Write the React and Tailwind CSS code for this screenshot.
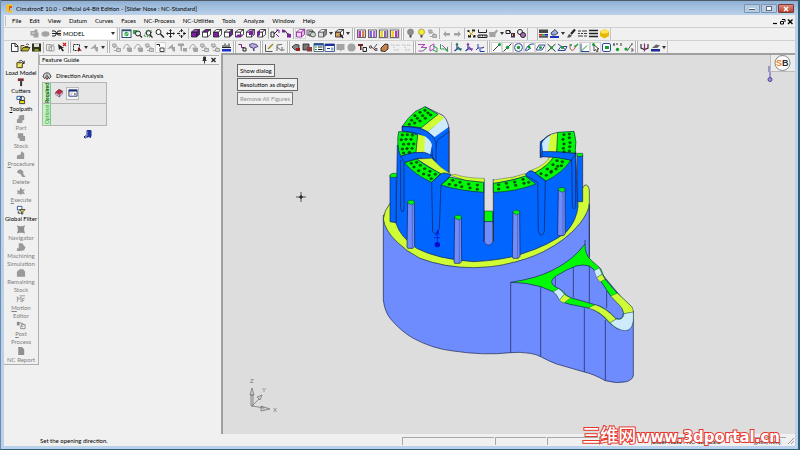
import React from 'react';

const G = '#a3a3a3';
const K = '#222';
const P = '#7b1fa2';

const cube = (front, side, top, stroke = K) => (
  <g stroke={stroke} strokeWidth="0.8">
    <path d="M1.5 4h5v5h-5z" fill={front} />
    <path d="M1.5 4l3-2.5h5L6.500 4z" fill={top} />
    <path d="M6.500 4l3-2.500v5l-3 2.500z" fill={side} />
  </g>
);

const blob = (color) => (
  <g fill={color}>
    <path d="M1.500 3h4v-1.500h3v3h1v5h-5v-2h-3z" />
    <path d="M3 5h3" stroke="#ddd" />
  </g>
);

const ghost = (a, b) => (
  <g fill="none" stroke={a}>
    <path d="M1.500 2h3.500v3H2z" fill={b} />
    <path d="M2.500 6l2.500-2 3 2.500" />
    <path d="M5.500 6.500h4v3h-4z" fill={b} />
    <path d="M3 8.500h2" />
  </g>
);

const book = (a, b) => (
  <g>
    <rect x="1.500" y="2" width="8" height="7.500" fill="#fff" stroke="#444" strokeWidth="0.8" />
    <rect x="2.500" y="3" width="2.500" height="6" fill={a} />
    <rect x="6" y="3" width="2.500" height="6" fill={b} />
  </g>
);

const bulb = (c) => (
  <g>
    <circle cx="5.500" cy="4" r="3" fill={c} stroke="#777" strokeWidth="0.6" />
    <path d="M4.500 7h2v2.500h-2z" fill="#444" />
  </g>
);

const sketch = (a, b) => (
  <g fill="none" stroke={a}>
    <path d="M1 2.500h7L4 5.500h6L6 9H1.500" />
    <path d="M6 9l3-3" stroke={b} />
  </g>
);

const axis = (a, b) => (
  <g fill="none" stroke={a} strokeWidth="1.200">
    <path d="M4 2v5h5M4 7L1.500 9" />
    <path d="M5 5l3 3.500M3 3l1-1.500 1 1.500" stroke={b} />
  </g>
);

const glyphs = {
  solid: blob(G),
  ellipse: <ellipse cx="5.500" cy="6" rx="4" ry="2.800" fill={G} />,
  layers: <path d="M1 3h3l3 4h3M1 8h3l3-5h3M1 5.500h9" fill="none" stroke={K} />,
  shade: (
    <g>
      <rect x="1" y="2" width="9" height="7.500" fill="#fff" stroke="#2b4f6b" />
      <path d="M1 2.500h9" stroke="#2b4f6b" strokeWidth="1.500" />
      <circle cx="5.500" cy="6" r="2.200" fill="#2fa84f" />
      <path d="M4 7l3-2" stroke="#fff" strokeWidth="0.700" />
    </g>
  ),
  zoomBox: (
    <g fill="none">
      <path d="M1 2h4v4H1z" fill="#39a24b" />
      <circle cx="6" cy="5.500" r="2.500" stroke={K} fill="#e8f2e8" />
      <path d="M8 7.500l2 2" stroke={K} strokeWidth="1.300" />
    </g>
  ),
  zoomAll: (
    <g fill="none">
      <path d="M1 8l3-6 5 1-2 6z" stroke="#2c9440" strokeDasharray="1.500 1" />
      <circle cx="5.500" cy="5" r="2.300" stroke={K} />
      <path d="M7 7l2.500 2.500" stroke={K} strokeWidth="1.300" />
    </g>
  ),
  zoom: (
    <g fill="none" stroke={K}>
      <circle cx="4.500" cy="4" r="2.500" fill="#fff" />
      <path d="M6.500 6l3.500 3.500" strokeWidth="1.500" />
    </g>
  ),
  pan: (
    <g stroke={K} fill={K}>
      <path d="M5.500 2v7M2 5.500h7" />
      <path d="M5.500 1l1.500 2H4zM5.500 10l1.500-2H4zM1 5.500l2-1.500v3zM10 5.500L8 4v3z" stroke="none" />
    </g>
  ),
  spin: (
    <g fill="none" stroke={K}>
      <path d="M5.500 1.500l3.500 4-3.500 4-3.500-4z" strokeDasharray="2 1" />
      <path d="M5.500 1v3M5.500 7v3M1 5.500h3M7 5.500h3" />
    </g>
  ),
  cubeFull: cube(P, '#5a0f7d', '#a24bc4'),
  cubeTop: cube('#fff', '#fff', P),
  cubeFront: cube(P, '#fff', '#fff'),
  cubeSide: cube('#fff', P, '#fff'),
  cubeBase: (
    <g>
      {cube('#fff', '#fff', '#fff')}
      <path d="M1.500 9l2-2.500h5.500L6.500 9z" fill={P} />
    </g>
  ),
  cubeBack: (
    <g>
      {cube('#fff', '#fff', '#fff')}
      <path d="M4 2.500h4.500v4.500H4z" fill={P} />
    </g>
  ),
  cubeLeft: (
    <g>
      {cube('#fff', '#fff', '#fff')}
      <path d="M1.500 4L4 2v5L1.500 9z" fill={P} />
    </g>
  ),
  pointer: (
    <g fill="none" stroke={K}>
      <path d="M1 4h3v5H1zM4 6l4-4" />
      <path d="M6 2h3v3M6 6l3 3" stroke={P} />
    </g>
  ),
  tree: (
    <g>
      <path d="M1 2l3 .5 2 3 3 1" fill="none" stroke={K} />
      <path d="M1 2h3v2.500H1zM6 6h4v3.500H6z" fill={P} />
    </g>
  ),
  wire: cube('#f6d6f6', '#e9b8ea', '#fff', '#8e1f99'),
  hidden: (
    <g fill="#dde" stroke="#444" strokeWidth="0.800">
      <path d="M1 2h5.500v5H1zM3 3.500h5v4.500H3z" />
      <circle cx="7" cy="6.500" r="2.500" fill="#c9d6c9" />
    </g>
  ),
  box: cube('#ddd', '#888', '#fff', '#555'),
  boxPick: (
    <g>
      {cube('#d8a060', '#fff', '#f2f2f2')}
      <path d="M6 6l3 4" stroke={K} strokeWidth="1.500" />
    </g>
  ),
  book1: book('#b33ac0', '#c84'),
  book2: book('#7a63d8', '#b06ad8'),
  book3: book('#f0d020', '#8a63b8'),
  book4: book('#f0d020', '#b33ac0'),
  bulbOff: bulb('#8d8d8d'),
  bulbOn: bulb('#f5f11c'),
  bulbs: ghost(G, '#bbb'),
  back: <path d="M2 6l3-3v2h4v2.500H5V9z" fill={G} />,
  fwd: <path d="M9 6L6 3v2H2v2.500h4V9z" fill={G} />,
  points: (
    <g fill={K}>
      <path d="M1.500 2h2v2h-2zM6 1.500h3v2H6zM2 7h3v2.500H2zM7 7h2.500v2.500H7z" />
      <path d="M3 4l5 4M8 3L3 8" stroke="#c8a020" />
    </g>
  ),
  measure: (
    <g fill="none" stroke={K}>
      <path d="M1.500 1.500v3h8v-3M1 7h9v2.500H1z" />
      <path d="M3 7v1.500M5.500 7v1.500M8 7v1.500" />
    </g>
  ),
  grayBrush: <path d="M1 4h5l3-2.500 1 1.500-2.500 3V9h-6z" fill={G} />,
  cut: (
    <g>
      <path d="M1 2.500h4v3H1zM4 3l3 3" stroke={K} fill="none" />
      <path d="M6 5h4v4.500H6z" fill="#4a2a55" />
      <path d="M7 6h1v2H7z" fill="#e0c020" />
    </g>
  ),
  cut2: (
    <g>
      <circle cx="4" cy="4" r="2.500" fill="none" stroke={K} />
      <circle cx="7" cy="7" r="2.500" fill="#b56ac0" stroke={K} />
    </g>
  ),
  palette: (
    <g>
      <path d="M1 1.500h9v3.500H1z" fill="#444" />
      <path d="M1 6h3v1.700H1z" fill="#d22" />
      <path d="M4 6h3v1.700H4z" fill="#2a2" />
      <path d="M7 6h3v1.700H7z" fill="#22c" />
      <path d="M1 8h9v1.700H1z" fill="#555" />
    </g>
  ),
  fill: (
    <g>
      <path d="M2 5l4-3.500 3 3.500-3 2H3z" fill="#9ab0e8" stroke={K} strokeWidth="0.800" />
      <path d="M1 8h9v2H1z" fill="#1f2fc0" />
    </g>
  ),
  brush: (
    <g>
      <path d="M5 6l4-4.500" stroke={K} strokeWidth="2.200" />
      <path d="M1 9.500L3 6l3 1.500-2 2z" fill="#555" />
    </g>
  ),
  dashes: <path d="M1 3h3M5 3h5M1 5.500h2M4 5.500h2M7 5.500h3M1 8h5M7 8h3" stroke={K} strokeWidth="0.900" />,
  lines: <path d="M1 2.500h9M1 5.500h9M1 8.500h9" stroke={K} strokeWidth="1.600" />,
  gold: (
    <g>
      <path d="M1 3.500l4.500-2.500L10 3.500V8l-4.500 2.500L1 8z" fill="#e6b800" />
      <ellipse cx="5.500" cy="3.500" rx="4" ry="2" fill="#ffe35a" />
    </g>
  ),
  doc: <path d="M2.500 1.500h4l2.500 2.500v5.500H2.500zM6 1.500v3h3" fill="#fff" stroke={K} strokeWidth="0.900" />,
  open: (
    <g stroke={K} strokeWidth="0.800">
      <path d="M1 9V3.500h3l1 1h3V6" fill="#f4ea6a" />
      <path d="M1 9l2-3.500h7L8 9z" fill="#b8b020" />
      <path d="M6 2.500q2-1.500 3 .5" fill="none" />
    </g>
  ),
  save: (
    <g>
      <path d="M1 1.500h9v8H1z" fill="#30351c" />
      <path d="M3 1.500h5V5H3z" fill="#ddd" />
      <path d="M3.500 7h4v2.500h-4z" fill="#8a9a30" />
    </g>
  ),
  grayBox: (
    <g fill="none" stroke={G}>
      <path d="M1.500 2.500h5v6h-5zM4 4h5v5H4z" />
      <path d="M4 7l5-5" />
    </g>
  ),
  deselect: (
    <g>
      <path d="M2 2l1 6 1.500-1.500 2 3 1.500-1-2-2.500H8z" fill={K} />
      <path d="M7 1l3 3M10 1L7 4" stroke="#d11" strokeWidth="1.200" />
    </g>
  ),
  select: (
    <g fill="none">
      <path d="M1.500 2.500h6v6h-6z" stroke={K} strokeDasharray="2 1" />
      <path d="M6 5v5l1.500-1.500L10 9z" fill="#7a1414" />
    </g>
  ),
  g1: ghost(G, '#d0d0d0'),
  g2: (
    <g fill={G}>
      <path d="M1 7l6-5v4z" />
      <path d="M5 5h4v4.500H7z" />
    </g>
  ),
  g3: (
    <g fill="none" stroke={G}>
      <path d="M1.500 7q1-5 4.500-4.500l2 3" />
      <path d="M5 6l4.500 0v3.500H6z" fill={G} />
    </g>
  ),
  g4: (
    <g fill={G}>
      <path d="M1 1.500h6v2.500H5v5H3.500V4H1z" />
      <path d="M6 6h4v3.500H6z" />
    </g>
  ),
  pickDark: (
    <g>
      <path d="M1.500 2.500h3v2" fill="none" stroke={K} />
      <path d="M5 6h4v3.500H5z" fill="none" stroke="#444" />
    </g>
  ),
  rulerBlue: (
    <g>
      <path d="M1 7h9v2.500H1z" fill="#1b2fd0" />
      <path d="M2 6V3M4 6V1.500M6 6V3M8 6V1.500M1 5.500h9" stroke={K} />
    </g>
  ),
  hook: (
    <g fill="none">
      <path d="M1.500 2.500h3v3h3" stroke="#7b1f7b" />
      <path d="M6 6h3v3H6z" stroke={K} />
    </g>
  ),
  funnel: <path d="M1.500 2.500l3-1 4 1 1.500 2-4 1.500v3l-1-3-3-1z" fill="#b9a8dd" stroke="#33306a" strokeWidth="0.800" />,
  edit: (
    <g fill="none">
      <path d="M1.500 2.500v7h7" stroke="#555" />
      <path d="M4 7l5-5" stroke="#9a8a20" strokeWidth="1.500" />
    </g>
  ),
  curve: <path d="M2 9V3l5-.5M2 5l5 4M7 5v3h2.500" fill="none" stroke="#666" />,
  feat1: (
    <g>
      <path d="M1 5q3-4 7-2v5H4z" fill="#888" stroke={K} strokeWidth="0.800" />
      <path d="M5 6h4v3H5z" fill="#9a2020" />
    </g>
  ),
  feat2: (
    <g>
      <path d="M1 2h6v6H1z" fill="#777" stroke={K} strokeWidth="0.800" />
      <path d="M5 5h5v4.500H5z" fill="#8b3a3a" />
    </g>
  ),
  list: (
    <g>
      <path d="M1 1.500h9.500v8H1z" fill="#fff" stroke="#2c5560" strokeWidth="0.800" />
      <path d="M1 2.500h9.500" stroke="#1e4f9c" strokeWidth="2" />
      <path d="M2 5h2M2 7.500h2" stroke="#1a9a4a" />
      <path d="M5 5h4.500M5 7.500h4.500" stroke={K} />
    </g>
  ),
  dialog: (
    <g>
      <path d="M1 2h9.500v7.500H1z" fill="#fff" stroke="#223a8a" strokeWidth="0.800" />
      <path d="M1 3h9.500" stroke="#1b2fa0" strokeWidth="2" />
      <path d="M3 6.500h3" stroke="#1b2fa0" />
      <path d="M7 5.500h2.500v3H7z" fill="#8aa" />
    </g>
  ),
  note: <path d="M1.500 2h8v6H7l-1.500 1.500L5 8H1.500z" fill={G} />,
  disc: <circle cx="5.500" cy="5.500" r="4" fill={G} />,
  stamp: (
    <g>
      <path d="M1 2h5v2H4.500v4H3V4H1z" fill="#6b2020" />
      <path d="M6 5.500h3.500v4H6z" fill="none" stroke={K} />
    </g>
  ),
  nodes: (
    <g fill="none" stroke="#555">
      <path d="M1.500 4h2v2h-2zM6 6l3-4M7 6.500h2v2H7z" />
      <path d="M3.500 5l3.500 3" stroke="#833" />
    </g>
  ),
  wedge: <path d="M2 9V6l4-4 3 .5v4.500L6 9.500z" fill="#c9854a" stroke={K} strokeWidth="0.900" />,
  gDots: <path d="M1 3h3v3M6 3h3v2M4 8h3M8 7v2.500" fill="none" stroke="#b5b5b5" strokeDasharray="1.500 1" />,
  skA: sketch('#b044b8', '#2aa84a'),
  skB: (
    <g fill="none">
      <path d="M2 9V4l4-2v5z" stroke="#b044b8" />
      <path d="M5 4l4 2v4l-4-2" stroke="#2aa84a" />
    </g>
  ),
  skC: (
    <g fill="none">
      <path d="M1.500 2v5h4l3 2.500V5" stroke="#2aa84a" />
      <path d="M3 3l5 5" stroke="#b044b8" />
    </g>
  ),
  ax1: axis('#1b3a9a', '#127a3a'),
  ax2: axis('#1b3aaa', '#a020a0'),
  ax3: (
    <g fill="none" stroke="#1b3aaa">
      <path d="M3 2v4h4M5 7v2.500h4.500M3 6L1 8" />
      <path d="M7 6l2-1" stroke={K} />
    </g>
  ),
  ray: (
    <g>
      <path d="M2 9l6-6" stroke={K} strokeWidth="0.900" />
      <circle cx="8.500" cy="2.500" r="1.500" fill="#12a030" />
    </g>
  ),
  mid: (
    <g>
      <path d="M1.500 9.500l8-8" stroke={K} strokeWidth="0.900" />
      <circle cx="5.500" cy="5.500" r="1.700" fill="#12a030" />
    </g>
  ),
  center: (
    <g>
      <circle cx="5.500" cy="5.500" r="4" fill="none" stroke="#33479a" />
      <circle cx="5.500" cy="5.500" r="1.700" fill="#12a030" />
    </g>
  ),
  near: (
    <g>
      <path d="M1 9q3-8 9-7M2 9l5-3" fill="none" stroke="#33479a" />
      <circle cx="5" cy="5" r="1.500" fill="#12a030" />
    </g>
  ),
  plane: (
    <g>
      <path d="M1 8l3-5h6L7 8z" fill="#fff" stroke="#33479a" />
      <circle cx="5.500" cy="5.500" r="1.500" fill="#12a030" />
    </g>
  ),
  cross: (
    <g>
      <path d="M1.500 2l8 7.500M9.500 2l-8 7.500" stroke="#333" />
      <circle cx="5.500" cy="5.700" r="1.500" fill="#12a030" />
    </g>
  ),
  planeX: (
    <g>
      <path d="M1 8.500l3-4h6l-2 4zM1 2l8 6" fill="none" stroke="#33479a" />
      <circle cx="5.500" cy="5.500" r="1.500" fill="#12a030" />
    </g>
  ),
  tangent: (
    <g fill="none">
      <path d="M2 2v4q2 5 5 0V3" stroke="#a55" />
      <path d="M7 5l3-3M2 3h2" stroke="#12a030" strokeWidth="1.300" />
    </g>
  ),
  origin: (
    <g fill="none">
      <path d="M2 1.500v8h8" stroke="#33479a" />
      <path d="M2 9.500l6-6" stroke="#12a030" />
    </g>
  ),
  arrowPt: (
    <g>
      <path d="M4 3v6l1.500-1.500L7 10l1-.5-1-2.500h2z" fill="#fff" stroke={K} strokeWidth="0.800" />
      <circle cx="3.500" cy="2.500" r="1.500" fill="#12a030" />
    </g>
  ),
  frame: (
    <g>
      <rect x="1.500" y="1.500" width="8" height="8" rx="1.500" fill="#fff" stroke="#33479a" />
      <path d="M4 4h4v3H4z" fill="#12a030" />
    </g>
  ),
  xyz: (
    <g>
      <path d="M1 2h2M4 2h2M8 2h2M2 2v2M9 3v1" stroke="#333" />
      <circle cx="5.500" cy="7.500" r="1.700" fill="#12a030" />
    </g>
  ),
  percent: (
    <g>
      <path d="M4 9l5-7" stroke="#555" />
      <circle cx="3" cy="7" r="1.600" fill="#12a030" />
      <path d="M8 2h2M8 7h2v2H8" fill="none" stroke="#555" />
    </g>
  ),
  psi: (
    <g fill="none" strokeWidth="1.200">
      <path d="M2 2v4l3.500 1.500L9 6V2" stroke="#333" />
      <path d="M5.500 1.500v8" stroke="#a0208a" />
    </g>
  ),
  plate: (
    <g>
      <path d="M2 6l4-3.500 4 1L7 6z" fill="#666" />
      <path d="M1 7h9v2.500H1z" fill="#1b2a9a" />
    </g>
  ),
};

const Glyph = ({ name, className = 'size-[11px]' }) => (
  <svg viewBox="0 0 11 11" className={className} aria-hidden="true">
    {glyphs[name]}
  </svg>
);

const viewRow = [
  ['shade', 'zoomBox', 'zoomAll', 'zoom', 'pan', 'spin'],
  '|',
  ['cubeFull', 'cubeTop', 'cubeFront', 'cubeSide', 'cubeBase', 'cubeBack', 'cubeLeft'],
  '|',
  ['pointer', 'tree'],
  '|',
  ['wire*', 'hidden', 'box', 'v', 'boxPick', 'v'],
  '||',
  ['book1', 'book2', 'book3*', 'book4*'],
  '||',
  ['bulbOff', 'bulbOn', 'bulbs'],
  '|',
  ['back', 'fwd'],
  '|',
  ['points', 'measure', 'grayBrush', 'v', 'cut', 'cut2'],
  '|||',
  ['palette', 'fill', 'v', 'brush', 'dashes', 'lines', 'gold'],
];

const pickRow = [
  ['doc', 'open', 'save'],
  '|',
  ['grayBox', 'deselect'],
  '||',
  ['select', 'v', 'g2', 'v'],
  '||',
  ['g1', 'g3', 'g3', 'g1', 'pickDark*', 'g2', 'g4', 'g3', 'g1', 'g1', 'rulerBlue'],
  '||',
  ['hook', 'funnel'],
  '||',
  ['edit', 'curve'],
  '||',
  ['feat1', 'feat2', 'list', 'dialog', 'note', 'disc', 'stamp', 'nodes', 'wedge', 'gDots', 'gDots'],
  '||',
  ['skA', 'skB', 'skC'],
  '|',
  ['ax1', 'ax2', 'ax3'],
  '||',
  ['ray*', 'mid*', 'center*', 'near*', 'plane*', 'cross', 'planeX', 'tangent', 'origin*', 'arrowPt*', 'frame', 'xyz', 'percent'],
  '||',
  ['psi', 'plate', 'v'],
];

const Separator = ({ kind }) => {
  if (kind === '|') return <span className="w-[3px] h-[11px] border-l border-[#b4b4b4] ml-px -mr-px" />;
  if (kind === '||') return <span className="w-[3px] h-[12px] border-x border-[#b4b4b4] bg-white mx-px" />;
  return <span className="w-[11px] h-[12px] border-x border-[#b4b4b4]" />;
};

const ToolItems = ({ row }) =>
  row.map((group, i) =>
    typeof group === 'string' ? (
      <Separator key={i} kind={group} />
    ) : (
      <div key={i} className="flex items-center">
        {group.map((name, j) => {
          if (name === 'v') {
            return (
              <button key={j} aria-label="More" className="w-[6px] h-[11px] flex items-center justify-center">
                <svg viewBox="0 0 4 3" className="w-1 h-[3px]"><path d="M0 0h4L2 3z" fill="#333" /></svg>
              </button>
            );
          }
          const pressed = name.endsWith('*');
          const id = name.replace('*', '');
          return (
            <button
              key={j}
              aria-label={id}
              className={`size-[11px] ${pressed ? 'bg-[#fafafa] outline outline-1 -outline-offset-1 outline-[#d4d4d4]' : ''}`}
            >
              <Glyph name={id} />
            </button>
          );
        })}
      </div>
    )
  );

const menus = ['File', 'Edit', 'View', 'Datum', 'Curves', 'Faces', 'NC-Process', 'NC-Utilities', 'Tools', 'Analyze', 'Window', 'Help'];

const sideIcons = {
  load: (
    <g>
      <path d="M1 9.500V4h6v5.500z" fill="#e8d82a" stroke={K} strokeWidth="0.900" />
      <path d="M3 2.500l3-1 3 3M9 2v3H6" fill="none" stroke={K} />
      <path d="M2 8.500l5-4" stroke="#fff" />
    </g>
  ),
  cutter: (
    <g>
      <path d="M2 1.500h6.500v3H2z" fill="#7a3030" />
      <path d="M4.500 4.500h2.200v5.500H4.500z" fill="#333" />
    </g>
  ),
  path: (
    <g fill="none" strokeWidth="0.900">
      <path d="M1 5V1.500h5V5z" stroke="#1d3a9a" fill="#cfe" />
      <circle cx="7" cy="4" r="2.500" stroke={K} />
      <path d="M4 9.500V6h5.500v3.500z" stroke={K} fill="#e8d82a" />
    </g>
  ),
  part: <path d="M3 2l3-1h3v6H7v3H1V6l2-1z" fill="#999" />,
  stock: <path d="M2 1.500h6v3h2V10H4V7H2z" fill="#999" />,
  proc: <path d="M1 6l4-1 1-3.500 3 2V10H1z" fill="#999" />,
  del: <path d="M2 2.500l3-1 3 2v3l2.500 3.500H7L5 7 1 5z" fill="#999" />,
  exec: <path d="M1 5h3l1-3.500L7 4l3-.5L8 6l2 3-3-.5L4 10V8L1 9l1-2z" fill="#999" />,
  filter: (
    <g>
      <path d="M1.500 1.500h5v4h-5z" fill="#fff" stroke="#2a4aa0" />
      <path d="M4 5h6L7.500 7.500V10H6V7.500z" fill="#e8d82a" stroke={K} strokeWidth="0.800" />
      <path d="M2.500 7v2H5" fill="none" stroke={K} />
    </g>
  ),
  nav: <path d="M1 1.500l3 1h3l3-1-1 3v3l1 3-3-1H4l-3 1 1-3v-3z" fill="#8f8f8f" />,
  mach: <path d="M3 1.500h4l2 3 1.500 1L9 9 5 10H1V7h2V4z" fill="#999" />,
  rest: <path d="M1 4l3-2.500h4L10 4v5.500H1z" fill="#999" />,
  motion: <path d="M1.500 3v6M1.500 3l2 3 2-3v6M7 9V5h2.500M7 7h2M4 2h6" fill="none" stroke="#999" />,
  post: (
    <g>
      <path d="M1 2h3v4H1z" fill="#888" />
      <path d="M4 3l4 1M6 5h4v4.500H5zM6 7h2" fill="none" stroke="#888" />
    </g>
  ),
  report: <path d="M2.500 1h4L9 3.500V10H2.500z" fill="#8f8f8f" />,
};

const sideGroups = [
  [
    { icon: 'load', lines: ['Load Model'], on: true },
    { icon: 'cutter', lines: ['Cutters'], on: true },
    { icon: 'path', lines: ['Toolpath'], on: true, key: true },
  ],
  [
    { icon: 'part', lines: ['Part'] },
    { icon: 'stock', lines: ['Stock'] },
    { icon: 'proc', lines: ['Procedure'], key: true },
    { icon: 'del', lines: ['Delete'] },
    { icon: 'exec', lines: ['Execute'], key: true },
  ],
  [{ icon: 'filter', lines: ['Global Filter'], on: true }],
  [
    { icon: 'nav', lines: ['Navigator'] },
    { icon: 'mach', lines: ['Machining', 'Simulation'] },
    { icon: 'rest', lines: ['Remaining', 'Stock'] },
    { icon: 'motion', lines: ['Motion', 'Editor'], key: true },
    { icon: 'post', lines: ['Post', 'Process'], key: true },
    { icon: 'report', lines: ['NC Report'] },
  ],
];

const SideBar = () => (
  <nav className="w-[35px] shrink-0 self-start border-r border-b border-[#b0b0b0] pt-[6px] flex flex-col gap-px">
    {sideGroups.map((group, i) => (
      <div key={i} className="flex flex-col">
        {group.map((item) => (
          <button
            key={item.lines[0]}
            className={`flex flex-col items-center text-[6px] leading-[8px] whitespace-nowrap ${item.on ? 'text-black' : 'text-[#808080]'}`}
          >
            <svg viewBox="0 0 11 11" className="size-[10px]" aria-hidden="true">{sideIcons[item.icon]}</svg>
            {item.lines.map((line, n) => (
              <span key={line}>
                {item.key && n === 0 ? <><u>{line[0]}</u>{line.slice(1)}</> : line}
              </span>
            ))}
          </button>
        ))}
      </div>
    ))}
  </nav>
);

const FeatureGuide = () => (
  <section className="w-[180px] shrink-0 text-[6px] leading-[8px]">
    <header className="h-[10px] flex items-center px-[2px] border-y border-l border-[#b0b0b0] bg-[#f4f4f4]">
      <h2 className="flex-1">Feature Guide</h2>
      <button aria-label="Pin" className="w-[7px] mr-[2px]">
        <svg viewBox="0 0 7 8" className="w-[7px] h-2"><path d="M2.500 1h2v3h-2zM1.500 4.500h4M3.500 5v2.500" fill="#333" stroke="#333" /></svg>
      </button>
      <button aria-label="Close" className="w-[7px]">
        <svg viewBox="0 0 7 8" className="w-[7px] h-2"><path d="M1.500 2l4 4M5.500 2l-4 4" stroke="#222" strokeWidth="1.300" /></svg>
      </button>
    </header>
    <div className="flex items-center gap-1 pl-[3px] pt-[5px] h-[17px]">
      <svg viewBox="0 0 11 11" className="size-[10px]">
        <path d="M1.500 6.500q0-4.500 4-4.500t4 4.500" fill="#ccc" stroke="#333" strokeWidth="0.900" />
        <path d="M1 6l2 2.500L4.500 6M6.500 6L8 8.500 10 6M5.500 4v5" fill="none" stroke="#333" />
        <path d="M4 8l1.500 2L7 8z" fill="#822" />
      </svg>
      <span>Direction Analysis</span>
    </div>
    <div className="ml-[3px] w-[65px] border border-[#b5b5b5] bg-[#e6e6e6]">
      <div className="flex h-[21px] items-center border-b border-[#b5b5b5]">
        <div className="w-2 h-full bg-[#bdf7bd] border-r border-[#7fc77f] flex items-center justify-center">
          <span className="[writing-mode:vertical-rl] rotate-180 text-[5px] leading-[8px] font-bold text-[#123a12]">Required</span>
        </div>
        <button aria-label="Direction" className="ml-[3px]">
          <svg viewBox="0 0 11 11" className="size-[10px]">
            <path d="M1.500 5l4-3.500 4 2-3.500 4z" fill="#c22b3a" stroke="#6a1a2a" strokeWidth="0.700" />
            <path d="M1.500 5v2l4.500 3V7.500zM6 7.500l3.500-4v2.500L6 10z" fill="#e9b7bd" stroke="#6a5a8a" strokeWidth="0.700" />
          </svg>
        </button>
        <button aria-label="Dialog" className="ml-[2px] size-[13px] border border-[#b8b8b8] bg-[#f5f5f5] flex items-center justify-center">
          <svg viewBox="0 0 11 11" className="size-[10px]">
            <path d="M1 2h9v7H1z" fill="#fff" stroke="#1c2f78" />
            <path d="M1 3h9" stroke="#1c2f78" strokeWidth="1.800" />
            <path d="M2.500 5.500h3M2.500 7h2" stroke="#99a" strokeWidth="0.700" />
            <path d="M7 5.500l2 1.200-2 1.300z" fill="#222" />
          </svg>
        </button>
      </div>
      <div className="flex h-[21px]">
        <div className="w-2 h-full bg-[#bdf7bd] border-r border-[#7fc77f] flex items-center justify-center">
          <span className="[writing-mode:vertical-rl] rotate-180 text-[5px] leading-[8px] text-[#4d8f4d]">Optional</span>
        </div>
      </div>
    </div>
    <button aria-label="Exit" className="block ml-[44px] mt-[3px]">
      <svg viewBox="0 0 10 10" className="size-[10px]">
        <path d="M4 1.500h4v6H4z" fill="#8fa6e0" stroke="#16288a" />
        <path d="M5 2l3-1v8l-3-1z" fill="#1c35a8" />
        <path d="M1 8h4M2.500 6.500L1 8l1.500 1.500" fill="none" stroke="#16288a" />
      </svg>
    </button>
  </section>
);

const PERI = '#6f8cff';
const BLUE = '#0066ff';
const GREEN = '#00fa05';
const LIME = '#d0fc36';
const ICE = '#cdebfb';

const holes = [
  // back left block
  [135, 62], [150, 52], [165, 46], [125, 76], [142, 70], [158, 62], [174, 54], [118, 88], [134, 84], [150, 78], [166, 70], [182, 60],
  // left block
  [97, 120], [112, 119], [127, 121], [94, 134], [108, 133], [123, 133], [101, 148], [116, 147], [131, 147], [97, 162], [111, 161], [126, 160], [101, 174], [118, 172],
  // front left block
  [124, 205], [140, 202], [132, 216], [151, 211], [146, 227], [164, 221], [180, 229], [161, 237], [177, 241], [196, 238], [184, 251],
  // front block
  [248, 256], [238, 268], [270, 262], [257, 271], [296, 267], [275, 275], [322, 270], [300, 279], [322, 283],
  // right of the slot
  [386, 269], [409, 265], [434, 261], [459, 253], [386, 282], [413, 277], [437, 271], [462, 265], [476, 262],
  // front right block
  [513, 236], [532, 222], [549, 209], [561, 197], [529, 241], [544, 229], [563, 214], [577, 200], [543, 232], [558, 222], [574, 212],
  // back right block
  [582, 119], [598, 117], [579, 133], [598, 128], [582, 147], [600, 143], [580, 160], [599, 155], [582, 170], [598, 168],
];

// Drawn on a 3x grid: 840 x 900 units for a 280 x 300 part
const PartModel = () => (
  <svg viewBox="0 0 840 900" className="absolute left-[147px] top-[40px] w-[280px] h-[300px]" role="img" aria-label="Slider Nose part">
    <g stroke="#15204a" strokeWidth="2" strokeLinejoin="round">
      {/* base body */}
      <path
        fill={PERI}
        d="M40 360V615Q44 650 62 672Q92 708 130 730Q190 762 250 768Q340 782 422 773Q450 770 480 775Q500 778 512 785Q540 800 560 807L643 831Q668 836 706 857Q740 867 770 860Q790 853 790 840V650L690 530L658 492V330Z"
      />
      {/* flange ring */}
      <path
        fill={LIME}
        d="M60 325Q42 348 40 372Q44 405 80 440Q110 470 150 490Q225 518 310 518Q370 516 400 509Q470 495 520 470Q590 435 630 385Q657 350 658 325V285Q655 268 645 270L620 300L610 380L80 385Z"
      />
      {/* back left wall */}
      <path fill={BLUE} d="M97 93L236 95V240L200 250L97 190Z" />
      {/* front wall */}
      <path
        fill={BLUE}
        d="M82 150L78 385Q90 425 140 460Q200 492 310 500Q400 496 455 477Q540 450 590 410Q620 375 624 335L617 170L525 165L512 178L550 190L490 235L468 238L370 262V440Q356 460 343 440V262L240 250L205 225L185 180Z"
      />
      <path fill={BLUE} d="M511 140V188L540 175L560 165L540 120Z" />
      {/* slot */}
      <path fill="#dddddd" stroke="none" d="M343 248H370V350H343Z" />
      <path fill={GREEN} d="M343 348H368V380H343Z" strokeWidth="1.500" />
      <path fill={PERI} d="M343 380H368V440Q364 450 356 450Q346 450 343 440Z" strokeWidth="1.500" />
      <path fill="none" d="M342 252V440M370 252V440" />

      {/* back left block */}
      <path fill={LIME} stroke="none" d="M202 56L224 68L174 110L152 98Z" />
      <path fill={ICE} stroke="none" d="M224 68L237 95L194 126L174 110Z" />
      <path fill={GREEN} d="M165 35L204 58L154 98Q125 94 97 94Q112 70 135 50Z" />
      <path fill="none" d="M165 35L220 62Q236 78 238 110V235M97 94V108M238 110L205 133Q196 142 196 195M190 190V140Q170 118 140 112" />

      {/* left block */}
      <path fill={BLUE} d="M97 95Q150 95 172 110Q196 128 198 145V200L188 188L184 145Q165 120 130 112L97 108Z" />
      <path fill={LIME} stroke="none" d="M143 118L165 124V175L136 172Z" />
      <path fill={ICE} stroke="none" d="M165 124Q184 138 186 150L180 180L163 176Z" />
      <path fill={GREEN} d="M86 110Q115 108 143 120Q140 150 138 172Q112 176 92 184Q78 148 86 110Z" />

      {/* front left block */}
      <path fill={BLUE} d="M92 184Q125 170 160 172Q182 176 190 190L142 190L103 203Z" />
      <path fill={LIME} strokeWidth="1" d="M140 192L185 190L212 216L243 238L213 237Z" />
      <path fill={GREEN} d="M103 203L140 192Q170 215 212 236L185 262Q135 240 103 203Z" />
      <path fill={BLUE} d="M185 262L214 236Q225 230 243 240L213 270L208 400Q200 425 188 410Z" />

      {/* front block */}
      <path fill={LIME} strokeWidth="1" d="M240 240L255 238Q290 250 343 250V263L290 258Z" />
      <path fill={GREEN} d="M213 270L240 246Q285 258 341 262V292Q270 288 213 270Z" />
      <path fill={LIME} strokeWidth="1" d="M370 255L430 246L468 235L474 242L420 256L370 266Z" />
      <path fill={GREEN} d="M370 265Q425 258 466 243L497 267Q440 290 370 292Z" />

      {/* front right block */}
      <path fill={LIME} strokeWidth="1" d="M478 228Q530 210 540 183L554 185Q530 218 495 233Z" />
      <path fill={BLUE} d="M466 240Q475 225 488 228L526 258L523 410Q514 432 505 410L503 262Z" />
      <path fill={GREEN} d="M495 233Q535 212 552 184L603 195Q580 232 528 258Z" />

      {/* back right block */}
      <path fill={LIME} stroke="none" d="M530 130Q540 118 563 112L560 171L530 172Z" />
      <path fill={ICE} stroke="none" d="M516 145Q524 128 541 122L534 172L519 170Z" />
      <path fill={GREEN} d="M563 112L612 109Q622 140 615 175L560 171Z" />
      <path fill={BLUE} d="M516 170Q560 168 618 176L605 196Q560 185 516 185Z" />
      <path fill={BLUE} d="M605 195L617 175V335Q612 348 607 335Z" />
      <path fill="none" d="M511 188V150Q520 120 563 112M92 195V340Q98 362 102 340V205" />

      {/* side pins */}
      <path fill={BLUE} d="M60 240H79L78 383L60 380Z" />
      <path fill={GREEN} strokeWidth="1.500" d="M60 240L66 235H80V247H60Z" />
      <path fill={BLUE} d="M622 180H638V320H622Z" />
      <path fill={GREEN} strokeWidth="1.500" d="M620 175H638V184H622Z" />

      {/* front pins */}
      {[[111, 322, 138], [252, 367, 138], [427, 352, 138], [563, 284, 138]].map(([x, y, h]) => (
        <g key={x}>
          <path d={`M${x + 2} ${y}h20l1 ${h - 6}l-5 6h-16l-2 -4z`} fill={PERI} />
          <path d={`M${x + 16} ${y + 6}v${h - 8}`} strokeWidth="1" />
          <path d={`M${x + 1} ${y}l5 -6h13l4 8l-10 6z`} fill={GREEN} strokeWidth="1.500" />
        </g>
      ))}

      {/* bracket */}
      <g transform="translate(0 435)">
        <path
          fill={GREEN}
          d="M422 127Q500 115 545 92Q610 60 645 12Q644 45 665 62L692 86Q698 100 704 116L742 160L785 200Q792 212 790 235Q788 272 765 272Q740 270 720 250Q690 215 660 205L600 193Q575 188 568 178Q560 162 550 155L512 140Q470 127 422 127Z"
        />
        <path
          fill={PERI}
          d="M545 124Q546 115 560 107Q590 88 618 78Q640 72 658 78Q674 86 680 105L722 168L755 202Q764 218 758 232Q750 240 738 236Q705 200 675 194L602 173Q588 168 580 155Q570 146 555 140Q544 134 545 124Z"
        />
        <g strokeWidth="1">
          <path fill={ICE} d="M672 92L688 84L696 103L680 113Z" />
          <path fill={LIME} d="M680 113L696 103L705 118L690 126Z" />
          <path fill={LIME} d="M722 168L742 160L785 200Q790 208 790 216L762 221Q758 204 750 197Z" />
          <path fill={ICE} d="M762 221L790 216Q794 272 765 272Q742 270 720 248L738 237Q750 241 756 235Q762 230 762 221Z" />
          <path fill={LIME} d="M655 204L675 194Q705 202 738 237L720 248Q690 212 655 204Z" />
          <path fill={LIME} d="M568 180L583 163Q590 170 602 173L582 189Q573 186 568 180Z" />
          <path fill={ICE} d="M550 155L566 146Q576 152 583 163L568 180Q560 162 550 155Z" />
        </g>
        <path
          fill="none"
          d="M422 127V338M512 140V350M643 205V396M706 240V422M556 112V138M610 82V172M658 78V188M710 152V204M658 -110V50M645 12V0"
        />
      </g>
    </g>

    <g fill="#0a6a14" stroke="#052a08" strokeWidth="2">
      {holes.map(([x, y], i) => (
        <ellipse key={i} cx={x} cy={y} rx="4" ry="3" />
      ))}
    </g>

    {/* direction marker */}
    <g stroke="#0a0ad0" strokeWidth="2" fill="none">
      <path d="M202 446V405M197 422L204 405L207 420M192 428H210" />
      <circle cx="202" cy="449" r="8" fill="#0a0ad0" stroke="none" />
    </g>
  </svg>
);

const Viewport = () => (
  <main className="relative flex-1 min-w-0 overflow-hidden bg-[#dddddd] border-t-2 border-l-2 border-[#a0a0a0]">
    <div className="flex flex-col items-start gap-px pl-[14px] pt-[9px] text-[6px] leading-[11px]">
      <button className="border border-[#666] bg-[#f0f0f0] px-[2px]">Show dialog</button>
      <button className="border border-[#666] bg-[#f0f0f0] px-[2px]">Resolution as display</button>
      <button disabled className="border border-[#777] bg-[#f0f0f0] px-[2px] text-[#8d8d8d]">Remove All Figures</button>
    </div>

    <PartModel />

    <svg viewBox="0 0 10 10" className="absolute left-[73px] top-[137px] size-[10px]">
      <path d="M5 0v10M0 5h10" stroke="#555" />
      <path d="M5 3v4M3 5h4" stroke="#111" />
    </svg>

    {/* axis triad */}
    <svg viewBox="0 0 34 40" className="absolute left-[24px] bottom-[19px] w-[34px] h-[40px]" fontFamily="Liberation Sans, sans-serif" fontSize="6" fill="#777">
      <g stroke="#777" strokeWidth="0.800" fill="#ccc">
        <path d="M4 31V20h2v11zM3 20l2-7 2 7zM5 31l7-7M10 22l5-2-2 5zM5 31l12 2M14 31l9 3-9 2z" />
      </g>
      <text x="3" y="8">Z</text>
      <text x="15" y="17">Y</text>
      <text x="26" y="37">X</text>
    </svg>

    {/* badge and view pin */}
    <div className="absolute right-0 top-0 w-[25px] h-[17px] bg-[#ececec] border-b border-l border-[#bbb]">
      <svg viewBox="0 0 25 17" className="w-[25px] h-[17px]">
        <circle cx="11.500" cy="8" r="7.500" fill="#fff" stroke="#777" strokeWidth="0.900" />
        <text x="5" y="11" fontFamily="Liberation Sans, sans-serif" fontWeight="bold" fontSize="9" fill="#ef7d1a">
          S<tspan fill="#2a2a2a">B</tspan>
        </text>
      </svg>
    </div>
    <svg viewBox="0 0 8 18" className="absolute right-[21px] top-[11px] w-2 h-[18px]">
      <path d="M3 0v6M4 6v6" stroke="#5a50b0" />
      <circle cx="4" cy="13.500" r="2" fill="#9a94d6" stroke="#4a40a0" />
    </svg>
  </main>
);

const StatusBar = () => (
  <footer className="relative h-[12px] shrink-0 flex items-stretch gap-px pt-[3px] pb-px text-[6px] leading-[8px] bg-[#f0f0f0]">
    <span className="pl-[36px] flex-1">Set the opening direction.</span>
    <span className="w-[92px] border-t border-l border-[#a8a8a8]" />
    <span className="w-[51px] border-t border-l border-[#a8a8a8]" />
    <span className="w-[51px] border-t border-l border-[#a8a8a8]" />
    <span className="w-[51px] border-t border-l border-[#a8a8a8]" />
    <span className="w-[102px] border-t border-l border-[#a8a8a8] whitespace-nowrap">Slider Nose : NC-Standard</span>
    <span className="w-[32px] border-t border-l border-[#a8a8a8] whitespace-nowrap">[mm/mm]</span>
    <svg viewBox="0 0 8 8" className="w-2 h-2"><path d="M7 1L1 7M7 4L4 7" stroke="#999" /></svg>
    <p className="absolute right-[15px] bottom-0 whitespace-nowrap leading-[18px] text-white font-bold text-[15px] font-['DejaVu_Sans','Noto_Sans_CJK_SC',sans-serif] [-webkit-text-stroke:2px_#e5352b] [paint-order:stroke_fill]">
      <span className="text-[18px] font-medium">三维网</span>www.3dportal.cn
    </p>
  </footer>
);

const TitleBar = () => (
  <header className="h-[15px] shrink-0 border-t border-[#4d5a66] bg-gradient-to-b from-[#8fb0d4] to-[#bcd2ea] flex items-center px-1 pt-px text-[6px]">
    <svg viewBox="0 0 9 9" className="size-[9px] mr-[2px]">
      <path d="M1 1l5-1 2 2H4v4l4 1-2 2-4-1z" fill="#f6c21a" />
      <path d="M4 2h3v2H5v2l-1 1z" fill="#d9541e" />
    </svg>
    <h1 className="flex-1 whitespace-nowrap">CimatronE 10.0 - Official 64-Bit Edition - [Slider Nose : NC-Standard]</h1>
    <div className="flex gap-px">
      <button aria-label="Minimize" className="w-[16px] h-[9px] rounded-[1px] border border-[#7c93ad] bg-[#b4cbe4] flex items-center justify-center">
        <span className="w-[6px] h-[2px] bg-white border-b border-[#556]" />
      </button>
      <button aria-label="Restore" className="w-[16px] h-[9px] rounded-[1px] border border-[#7c93ad] bg-[#b4cbe4] flex items-center justify-center">
        <span className="w-[6px] h-[5px] bg-white border border-[#667]" />
      </button>
      <button aria-label="Close" className="w-[16px] h-[9px] rounded-[1px] border border-[#7a3a34] bg-gradient-to-b from-[#d98b80] to-[#b8402f] flex items-center justify-center">
        <svg viewBox="0 0 6 6" className="size-[6px]"><path d="M1 1l4 4M5 1L1 5" stroke="#fff" strokeWidth="1.500" /></svg>
      </button>
    </div>
  </header>
);

const App = () => (
  <div className="h-screen flex flex-col overflow-hidden bg-[#b9d1ea] border-l border-l-[#6f8ba6] border-r-2 border-b border-r-[#2f5f78] border-b-[#2f5f78] text-black font-['Lato','Noto_Sans',sans-serif]">
    <TitleBar />
    <div className="flex-1 min-h-0 flex flex-col ml-[3px] mr-[3px] mb-[3px] bg-[#f0f0f0]">
      <div className="h-[12px] shrink-0 flex items-center text-[6px] leading-[10px]">
        <span className="w-px h-[10px] bg-[#c0c0c0] ml-px mr-[6px]" />
        <nav className="flex-1 flex gap-[8px]">
          {menus.map((m) => (
            <button key={m} className="whitespace-nowrap">{m}</button>
          ))}
        </nav>
        <div className="flex gap-px pr-px">
          <button aria-label="Minimize document"><svg viewBox="0 0 7 7" className="size-[7px]"><path d="M2 5.500h4" stroke="#000" strokeWidth="1.200" /></svg></button>
          <button aria-label="Restore document"><svg viewBox="0 0 7 7" className="size-[7px]"><path d="M3 1.500h3v2.500M1.500 3.500h3v2.500h-3z" fill="none" stroke="#000" /></svg></button>
          <button aria-label="Close document"><svg viewBox="0 0 7 7" className="size-[7px]"><path d="M1 1.500l4.500 4.500M5.500 1.500L1 6" stroke="#000" strokeWidth="1.400" /></svg></button>
        </div>
      </div>

      <div className="h-[13px] shrink-0 flex items-center border-t border-[#d0d0d0]">
        <div className="flex items-center shrink-0 pl-[25px] border-r border-b border-[#c4c4c4]">
          <button aria-label="solid"><Glyph name="solid" /></button>
          <button aria-label="ellipse"><Glyph name="ellipse" /></button>
          <button aria-label="layers"><Glyph name="layers" /></button>
          <div className="relative w-[54px] h-[11px]">
            <select aria-label="UCS" className="appearance-none w-full h-full bg-white pl-px text-[6px] leading-[11px] block">
              <option>MODEL</option>
            </select>
            <svg viewBox="0 0 4 3" className="absolute right-px top-1 w-1 h-[3px] pointer-events-none"><path d="M0 0h4L2 3z" fill="#333" /></svg>
          </div>
          <Separator kind="||" />
          <ToolItems row={viewRow} />
        </div>
      </div>
      <div className="h-[13px] shrink-0 flex items-center border-t border-[#d0d0d0]">
        <div className="flex items-center shrink-0 pl-[5px] border-r border-[#c4c4c4]">
          <ToolItems row={pickRow} />
        </div>
      </div>

      <div className="flex-1 min-h-0 flex">
        <SideBar />
        <div className="pt-[2px] pr-[2px] shrink-0"><FeatureGuide /></div>
        <Viewport />
      </div>
      <StatusBar />
    </div>
  </div>
);

export default App;
